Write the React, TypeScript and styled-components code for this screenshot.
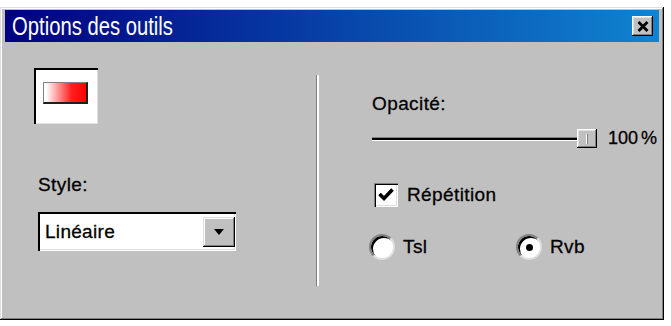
import React from 'react';
import styled, { createGlobalStyle } from 'styled-components';

const GlobalStyle = createGlobalStyle`
  html, body {
    margin: 0;
    padding: 0;
    background: #fff;
  }
  body {
    font-family: 'Liberation Sans', Arial, sans-serif;
    color: #000;
  }
`;

const Page = styled.div`
  width: 671px;
  height: 326px;
  padding-top: 7px;
  box-sizing: border-box;
  overflow: hidden;
`;

const Window = styled.div`
  width: 664px;
  height: 313px;
  box-sizing: border-box;
  padding: 3px;
  background: #c0c0c0;
  box-shadow: inset -1px -1px #000, inset 1px 1px #dfdfdf, inset -2px -2px #808080,
    inset 2px 2px #fff;
  display: flex;
  flex-direction: column;
`;

const TitleBar = styled.div`
  height: 32px;
  margin: 0 2px;
  padding: 0 6px 0 7px;
  background: linear-gradient(to right, #000080, #1084d0);
  display: flex;
  align-items: center;
  justify-content: space-between;
`;

const TitleText = styled.span`
  display: inline-block;
  color: #fff;
  font-size: 25px;
  line-height: 1;
  transform: scaleX(0.81) scaleY(1.05);
  transform-origin: left center;
  white-space: nowrap;
`;

const CloseButton = styled.button`
  width: 21px;
  height: 20px;
  padding: 0;
  border: none;
  background: #c0c0c0;
  box-shadow: inset -1px -1px #000, inset 1px 1px #fff, inset -2px -2px #808080,
    inset 2px 2px #dfdfdf;
  display: flex;
  align-items: center;
  justify-content: center;
`;

const Body = styled.div`
  flex: 1;
  display: flex;
`;

const LeftColumn = styled.div`
  width: 313px;
  box-sizing: border-box;
  padding: 26px 0 0 31px;
  display: flex;
  flex-direction: column;
  align-items: flex-start;
`;

const Swatch = styled.div`
  width: 64px;
  height: 56px;
  box-sizing: border-box;
  padding: 14px 0 0 9px;
  background: #fff;
  box-shadow: inset 2px 2px #000, inset -1px -1px #dfdfdf;
`;

const GradientBar = styled.div`
  width: 45px;
  height: 22px;
  box-sizing: border-box;
  background: linear-gradient(to right, #fff 5%, #ff2020 65%, #f00);
  border-top: 1px solid #808080;
  border-left: 1px solid #808080;
  border-right: 2px solid #202020;
  border-bottom: 2px solid #202020;
`;

const Label = styled.div<{ $gap?: number }>`
  font-size: 19px;
  line-height: 22px;
  letter-spacing: 0.4px;
  -webkit-text-stroke: 0.3px #000;
  margin-top: ${(p) => p.$gap ?? 0}px;
  white-space: nowrap;
`;

const Select = styled.div`
  margin-top: 16px;
  margin-left: 4px;
  width: 198px;
  height: 39px;
  box-sizing: border-box;
  padding: 0 1px 0 7px;
  background: #fff;
  box-shadow: inset 2px 2px #000, inset -1px -1px #fff, inset -2px -2px #dfdfdf;
  display: flex;
  align-items: center;
  justify-content: space-between;
  font-size: 19px;
  letter-spacing: 0.3px;
  -webkit-text-stroke: 0.3px #000;
`;

const SelectButton = styled.div`
  width: 32px;
  height: 30px;
  margin-top: 1px;
  background: #c0c0c0;
  box-shadow: inset -1px -1px #000, inset 1px 1px #dfdfdf, inset -2px -2px #808080,
    inset 2px 2px #fff;
  display: flex;
  align-items: center;
  justify-content: center;
`;

const Divider = styled.div`
  width: 3px;
  height: 211px;
  margin-top: 33px;
  border-left: 1px solid #808080;
  border-right: 2px solid #fff;
  box-sizing: border-box;
`;

const RightColumn = styled.div`
  flex: 1;
  padding: 51px 0 0 53px;
  display: flex;
  flex-direction: column;
`;

const SliderRow = styled.div`
  margin-top: 14px;
  height: 19px;
  display: flex;
  align-items: center;
`;

const Track = styled.div`
  width: 205px;
  height: 4px;
  box-sizing: border-box;
  background: #000;
  border-top: 1px solid #808080;
  border-bottom: 1px solid #fff;
`;

const Thumb = styled.div`
  width: 20px;
  height: 19px;
  box-sizing: border-box;
  padding-top: 5px;
  background: #c0c0c0;
  box-shadow: inset -1px -1px #000, inset 1px 1px #fff, inset -2px -2px #808080,
    inset 2px 2px #dfdfdf;
  display: flex;
  justify-content: center;
  align-items: flex-start;

  &::after {
    content: '';
    width: 1px;
    height: 10px;
    background: #808080;
    border-left: 1px solid #fff;
  }
`;

const Value = styled.span`
  margin-left: 11px;
  font-size: 18px;
  word-spacing: -2px;
  -webkit-text-stroke: 0.3px #000;
  white-space: nowrap;
`;

const CheckRow = styled.div`
  margin-top: 35px;
  margin-left: 2px;
  display: flex;
  align-items: center;
  gap: 9px;
`;

const CheckBox = styled.div`
  width: 24px;
  height: 24px;
  background: #fff;
  box-shadow: inset 1px 1px #808080, inset 2px 2px #000, inset -1px -1px #fff,
    inset -2px -2px #dfdfdf;
  display: flex;
  align-items: center;
  justify-content: center;
`;

const RadioRow = styled.div`
  margin-top: 27px;
  margin-left: -3px;
  display: grid;
  grid-template-columns: 147px auto;
`;

const RadioOption = styled.div`
  display: flex;
  align-items: center;
  gap: 8px;
`;

const Radio = styled.div<{ $checked?: boolean }>`
  width: 26px;
  height: 26px;
  box-sizing: border-box;
  border-radius: 50%;
  background: #fff;
  border: 2px solid;
  border-color: #808080 #dfdfdf #dfdfdf #808080;
  box-shadow: inset 2px 2px 0 #000;
  display: flex;
  align-items: center;
  justify-content: center;

  &::after {
    content: '';
    width: 7px;
    height: 7px;
    border-radius: 50%;
    background: #000;
    display: ${(p) => (p.$checked ? 'block' : 'none')};
  }
`;

export default function App() {
  return (
    <Page>
      <GlobalStyle />
      <Window>
        <TitleBar>
          <TitleText>Options des outils</TitleText>
          <CloseButton aria-label="Fermer">
            <svg width="12" height="11" viewBox="0 0 12 11">
              <path d="M1.5 1 L10.5 10 M10.5 1 L1.5 10" stroke="#000" strokeWidth="2.8" />
            </svg>
          </CloseButton>
        </TitleBar>
        <Body>
          <LeftColumn>
            <Swatch>
              <GradientBar />
            </Swatch>
            <Label $gap={50} style={{ marginLeft: 4 }}>
              Style:
            </Label>
            <Select>
              <span>Linéaire</span>
              <SelectButton>
                <svg width="10" height="6" viewBox="0 0 10 6">
                  <path d="M0 0 H10 L5 6 Z" fill="#000" />
                </svg>
              </SelectButton>
            </Select>
          </LeftColumn>
          <Divider />
          <RightColumn>
            <Label>Opacité:</Label>
            <SliderRow>
              <Track />
              <Thumb />
              <Value>100 %</Value>
            </SliderRow>
            <CheckRow>
              <CheckBox>
                <svg width="16" height="14" viewBox="0 0 16 14">
                  <path d="M1.5 6 L6 10.5 L14.5 1.5" fill="none" stroke="#000" strokeWidth="3.6" />
                </svg>
              </CheckBox>
              <Label>Répétition</Label>
            </CheckRow>
            <RadioRow>
              <RadioOption>
                <Radio />
                <Label>Tsl</Label>
              </RadioOption>
              <RadioOption>
                <Radio $checked />
                <Label>Rvb</Label>
              </RadioOption>
            </RadioRow>
          </RightColumn>
        </Body>
      </Window>
    </Page>
  );
}
